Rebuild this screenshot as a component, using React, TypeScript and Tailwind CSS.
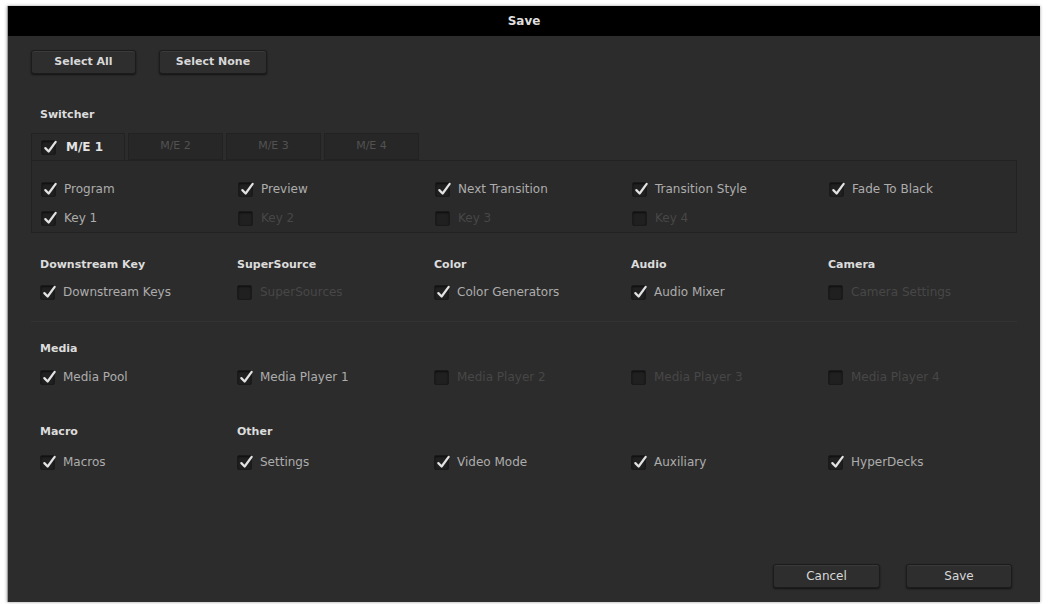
import React from "react";

type Item = { label: string; on: boolean } | null;

function Check({ on }: { on: boolean }) {
  return (
    <span className="relative inline-block w-[15px] h-[15px] shrink-0 rounded-[2px] bg-[#202020] border border-[#1a1a1a] shadow-[inset_0_1px_2px_rgba(0,0,0,0.6)]">
      {on && (
        <svg
          viewBox="0 0 16 16"
          className="absolute left-[1px] top-[-2px] w-[15px] h-[16px]"
        >
          <path
            d="M2.5 9.2 L6 12.8 L13.5 2.5"
            fill="none"
            stroke="#e2e2e2"
            strokeWidth="2.4"
            strokeLinecap="round"
            strokeLinejoin="round"
          />
        </svg>
      )}
    </span>
  );
}

function Option({ item }: { item: Item }) {
  if (!item) return <div />;
  return (
    <div className="flex items-center gap-[8px] h-[20px]">
      <Check on={item.on} />
      <span
        className={`text-[12px] ${item.on ? "text-[#adadad]" : "text-[#474747]"}`}
      >
        {item.label}
      </span>
    </div>
  );
}

function Row({ items }: { items: Item[] }) {
  return (
    <div className="grid grid-cols-[197px_197px_197px_197px_197px]">
      {items.map((it, i) => (
        <Option key={i} item={it} />
      ))}
    </div>
  );
}

function Header({ labels }: { labels: string[] }) {
  return (
    <div className="grid grid-cols-[197px_197px_197px_197px_197px] h-[16px] items-center">
      {labels.map((l, i) => (
        <span key={i} className="text-[11px] font-bold text-[#dcdcdc]">
          {l}
        </span>
      ))}
    </div>
  );
}

function Btn({ children, w, bold }: { children: React.ReactNode; w: string; bold?: boolean }) {
  return (
    <button
      className={`${w} h-[24px] rounded-[3px] bg-[#2e2e2e] border border-[#1c1c1c] shadow-[0_1px_2px_rgba(0,0,0,0.6),inset_0_1px_0_rgba(255,255,255,0.06)] text-[#d8d8d8] ${
        bold ? "text-[11px] font-bold" : "text-[12px]"
      }`}
    >
      {children}
    </button>
  );
}

export default function App() {
  return (
    <div
      className="w-[1048px] h-[604px] bg-white pt-[6px] pl-[7px] pr-[8px] pb-[2px]"
      style={{ fontFamily: '"DejaVu Sans", "Open Sans", sans-serif' }}
    >
      <div className="flex flex-col h-full bg-[#2c2c2c] border-l border-[#9a9a9a] shadow-[0_0_3px_rgba(0,0,0,0.4)]">
        {/* Title bar */}
        <div className="h-[30px] shrink-0 bg-black flex items-center justify-center">
          <span className="text-[12px] font-bold text-[#dedede]">Save</span>
        </div>

        <div className="flex-1 flex flex-col px-[23px]">
          <div className="flex gap-[23px] mt-[14px]">
            <Btn w="w-[105px]" bold>
              Select All
            </Btn>
            <Btn w="w-[108px]" bold>
              Select None
            </Btn>
          </div>

          {/* Switcher */}
          <div className="mt-[33px] pl-[9px] h-[16px] flex items-center">
            <span className="text-[11px] font-bold text-[#dcdcdc]">Switcher</span>
          </div>
          <div className="flex gap-[3px] mt-[10px] h-[27px]">
            <div className="w-[94px] flex items-center gap-[10px] pl-[9px] bg-[#2a2a2a] border border-b-0 border-[#222]">
              <Check on />
              <span className="text-[12px] font-bold text-[#e4e4e4]">M/E 1</span>
            </div>
            {["M/E 2", "M/E 3", "M/E 4"].map((t) => (
              <div
                key={t}
                className="w-[95px] flex items-center justify-center bg-[#272727] border border-[#222]"
              >
                <span className="text-[11px] text-[#525252]">{t}</span>
              </div>
            ))}
          </div>
          <div className="h-[73px] bg-[#2a2a2a] border border-[#222] pl-[9px] pt-[18px] flex flex-col gap-[9px]">
            <Row
              items={[
                { label: "Program", on: true },
                { label: "Preview", on: true },
                { label: "Next Transition", on: true },
                { label: "Transition Style", on: true },
                { label: "Fade To Black", on: true },
              ]}
            />
            <Row
              items={[
                { label: "Key 1", on: true },
                { label: "Key 2", on: false },
                { label: "Key 3", on: false },
                { label: "Key 4", on: false },
                null,
              ]}
            />
          </div>

          {/* Keys / Sources */}
          <div className="pl-[9px] mt-[24px] flex flex-col gap-[9px]">
            <Header labels={["Downstream Key", "SuperSource", "Color", "Audio", "Camera"]} />
            <Row
              items={[
                { label: "Downstream Keys", on: true },
                { label: "SuperSources", on: false },
                { label: "Color Generators", on: true },
                { label: "Audio Mixer", on: true },
                { label: "Camera Settings", on: false },
              ]}
            />
          </div>
          <div className="mt-[19px] h-px bg-[#232323] border-b border-[#333]" />

          {/* Media */}
          <div className="pl-[9px] mt-[19px] flex flex-col gap-[10px]">
            <Header labels={["Media"]} />
            <Row
              items={[
                { label: "Media Pool", on: true },
                { label: "Media Player 1", on: true },
                { label: "Media Player 2", on: false },
                { label: "Media Player 3", on: false },
                { label: "Media Player 4", on: false },
              ]}
            />
          </div>

          {/* Macro / Other */}
          <div className="pl-[9px] mt-[37px] flex flex-col gap-[12px]">
            <Header labels={["Macro", "Other"]} />
            <Row
              items={[
                { label: "Macros", on: true },
                { label: "Settings", on: true },
                { label: "Video Mode", on: true },
                { label: "Auxiliary", on: true },
                { label: "HyperDecks", on: true },
              ]}
            />
          </div>

          <div className="mt-auto mb-[14px] flex justify-end gap-[26px] pr-[5px]">
            <Btn w="w-[107px]">Cancel</Btn>
            <Btn w="w-[106px]">Save</Btn>
          </div>
        </div>
      </div>
    </div>
  );
}
